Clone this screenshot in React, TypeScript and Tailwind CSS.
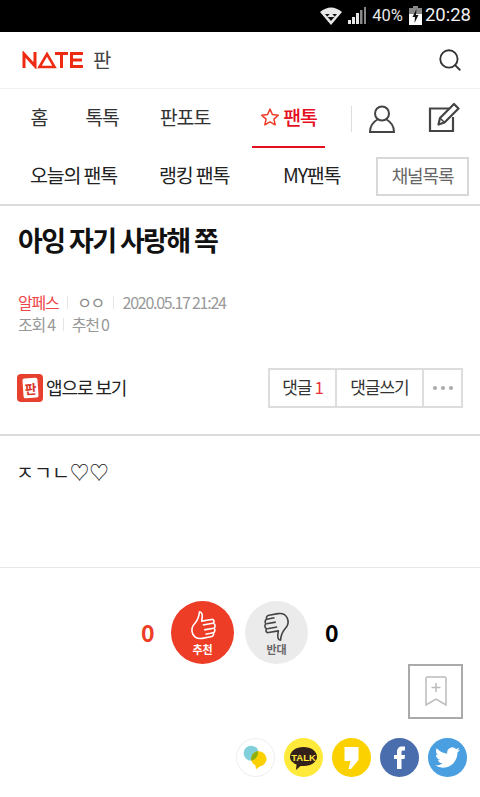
import { Search } from "lucide-react";

const KR = "font-['Noto_Sans_CJK_KR',sans-serif]";

function StatusBar() {
  return (
    <div className="flex h-8 items-center justify-end bg-black pr-[9px] text-white">
      {/* wifi */}
      <svg width="24" height="20" viewBox="0 0 24 20" className="mr-[4px]">
        <path d="M1 6 Q12 -3 23 6 L12 19 Z" fill="#e8e8e8" />
        <path d="M6 8 H18 L12 15 Z" fill="#111" />
        <path d="M8 11 H16 L12 6.5 Z" fill="#e8e8e8" />
      </svg>
      {/* signal */}
      <svg width="20" height="20" viewBox="0 0 20 20" className="mr-[5px]">
        <rect x="1" y="14" width="3" height="4" fill="#e8e8e8" />
        <rect x="5" y="11" width="3" height="7" fill="#e8e8e8" />
        <rect x="9" y="7" width="3" height="11" fill="#e8e8e8" />
        <rect x="13" y="4" width="2.5" height="14" fill="#888" />
        <rect x="17" y="1" width="2" height="17" fill="#888" />
      </svg>
      <span className="mr-[6px] font-['Roboto',sans-serif] text-[16.5px] text-[#e8e8e8]">40%</span>
      {/* battery */}
      <svg width="13" height="20" viewBox="0 0 13 20" className="mr-[3px]">
        <rect x="4" y="0" width="5" height="3" fill="#888" />
        <rect x="0" y="2" width="13" height="6" fill="#888" />
        <rect x="0" y="8" width="13" height="11" fill="#fff" />
        <path d="M7.5 3 L3.5 11 H6 L5.5 17 L9.5 9 H7 Z" fill="#111" />
      </svg>
      <span className="font-['Roboto',sans-serif] text-[18.5px] text-[#f0f0f0]">20:28</span>
    </div>
  );
}

function Header() {
  return (
    <div className="flex h-[57px] items-center justify-between border-b border-[#f0f0f0] pl-[22px] pr-[17px]">
      <div className="flex items-center">
        {/* NATE logo */}
        <svg width="62" height="18" viewBox="0 0 62 18" fill="none" stroke="#ee2a12" strokeWidth="3">
          <path d="M2 17 V3 L13 15 V1" />
          <path d="M17.5 16 L25 3 L32.5 16 Z" strokeWidth="2.6" />
          <path d="M33 2.5 H46 M39.5 2.5 V17" />
          <path d="M61 2.5 H49.5 V15.5 H61 M49.5 9 H60" />
        </svg>
        <span className={`${KR} ml-[9px] text-[20px] leading-none text-[#444]`}>판</span>
      </div>
      <Search size={26} strokeWidth={1.7} color="#333" />
    </div>
  );
}

function Nav() {
  return (
    <div className={`${KR} flex h-[59px] items-center text-[19.5px] tracking-[-0.06em] text-[#333]`}>
      <div className="w-[78px] pb-[3px] text-center">홈</div>
      <div className="w-[48px] pb-[3px] text-center">톡톡</div>
      <div className="w-[118px] pb-[3px] text-center">판포토</div>
      <div className="relative ml-[8px] flex h-full w-[73px] items-center justify-center pb-[3px] font-medium text-[#e60f1e]">
        <svg width="20" height="20" viewBox="0 0 24 24" fill="none" stroke="#ee3a24" strokeWidth="1.8" className="mr-[3px]">
          <path d="M12 2.5 L14.9 9 L22 9.8 L16.7 14.5 L18.2 21.5 L12 17.9 L5.8 21.5 L7.3 14.5 L2 9.8 L9.1 9 Z" strokeLinejoin="round" />
        </svg>
        팬톡
        <div className="absolute inset-x-0 bottom-0 h-[2.5px] bg-[#e60f1e]" />
      </div>
      <div className="ml-[26px] h-[26px] w-px bg-[#ddd]" />
      {/* person */}
      <svg width="28" height="30" viewBox="0 0 28 30" fill="none" stroke="#444" strokeWidth="2" className="ml-[16px]">
        <circle cx="14" cy="9.5" r="7" />
        <path d="M9.5 15.5 C5 18 2 22 2 28 H26 C26 22 23 18 18.5 15.5" />
      </svg>
      {/* write */}
      <svg width="32" height="32" viewBox="0 0 32 32" fill="none" stroke="#444" strokeWidth="2.2" className="ml-[32px] -mt-[2px]">
        <path d="M21 6.5 H2 V29 H25 V15" />
        <path d="M10.5 22.5 L12 16 L26 2 L30.5 6.5 L16.5 20.5 Z" strokeLinejoin="round" />
        <path d="M12 16 L16.5 20.5" strokeWidth="1.5" />
      </svg>
    </div>
  );
}

function SubNav() {
  return (
    <div className={`${KR} flex h-[58px] items-center border-b-2 border-[#dcdcdc] text-[19.5px] tracking-[-0.06em] text-[#222]`}>
      <div className="ml-[30px] w-[129px] pb-[3px]">오늘의 팬톡</div>
      <div className="w-[124px] pb-[3px]">랭킹 팬톡</div>
      <div className="w-[93px] pb-[3px]">MY팬톡</div>
      <div className="flex h-[39px] w-[93px] items-center justify-center border-2 border-[#d8d8d8] pb-[2px] text-[18px] text-[#666]">
        채널목록
      </div>
    </div>
  );
}

function Meta() {
  return (
    <div className="mt-[33px] pl-[18px] text-[16px] leading-[22px] tracking-[-0.08em] text-[#999]">
      <div className="flex items-center">
        <span className="text-[#f0454a]">알페스</span>
        <span className="mx-[9px] h-[13px] w-px bg-[#e5e5e5]" />
        <span className="text-[#888] tracking-[-0.1em]">ㅇㅇ</span>
        <span className="mx-[9px] h-[13px] w-px bg-[#e5e5e5]" />
        <span>2020.05.17 21:24</span>
      </div>
      <div className="flex items-center">
        <span>조회 4</span>
        <span className="mx-[8px] h-[13px] w-px bg-[#e5e5e5]" />
        <span>추천 0</span>
      </div>
    </div>
  );
}

function ActionRow() {
  return (
    <div className="mt-[33px] flex h-[40px] items-center justify-between pl-[17px] pr-[17px]">
      <div className="flex items-center">
        <div className="flex h-[28px] w-[26px] items-center justify-center rounded-[4px] bg-[#e8402e]">
          <div className="flex h-[20px] w-[15px] -rotate-[4deg] items-center justify-center rounded-[2px] bg-white text-[13px] font-bold leading-none text-[#d8352a]">판</div>
        </div>
        <span className="ml-[3px] pb-[2px] text-[18px] tracking-[-0.06em] text-[#222]">앱으로 보기</span>
      </div>
      <div className="flex h-[40px] border-2 border-[#ddd] text-[17px] tracking-[-0.06em] text-[#333]">
        <div className="flex w-[67px] items-center justify-center border-r-2 border-[#ddd] pb-[2px]">
          댓글<span className="ml-[3px] text-[#e8343c]">1</span>
        </div>
        <div className="flex w-[87px] items-center justify-center border-r-2 border-[#ddd] pb-[2px]">댓글쓰기</div>
        <div className="flex w-[37px] flex-1 items-center justify-center gap-[4px]">
          <i className="h-[4px] w-[4px] rounded-full bg-[#aaa]" />
          <i className="h-[4px] w-[4px] rounded-full bg-[#aaa]" />
          <i className="h-[4px] w-[4px] rounded-full bg-[#aaa]" />
        </div>
      </div>
    </div>
  );
}

function Thumb({ color, down }: { color: string; down?: boolean }) {
  return (
    <svg width="28" height="32" viewBox="0 0 28 32" fill="none" stroke={color} strokeWidth="1.6" strokeLinejoin="round" className={down ? "rotate-[170deg]" : "-rotate-[10deg]"}>
      <path d="M13 1.5 C15.5 2 15.5 5 14.5 8 L13.5 11 H23.5 C26 11 26.5 14 24.5 15 C26.5 16 26.5 19 24.5 20 C25.5 21.5 25 24 23 24.5 C23.5 26.5 22 28 20 28 H11 C7 28 3.5 26 2.5 22 C1.5 18 3.5 14 7 11.5 C10 9 12 5 13 1.5 Z" />
      <path d="M14 15 H24 M14.5 20 H24 M15 24.5 H23" />
    </svg>
  );
}

function Votes() {
  return (
    <div className="mt-[33px] flex items-center text-[23px] font-bold">
      <span className="ml-[141px] w-[30px] text-[#ee3d26]">0</span>
      <div className="flex h-[63px] w-[63px] flex-col items-center justify-center rounded-full bg-[#ee3d26] pt-[1px] text-[11px] text-white">
        <Thumb color="#fff" />
        <span className="mt-[1px] leading-[13px]">추천</span>
      </div>
      <div className="ml-[11px] flex h-[63px] w-[63px] flex-col items-center justify-center rounded-full bg-[#ebebeb] text-[11px] text-[#666]">
        <Thumb color="#444" down />
        <span className="mt-[1px] leading-[13px]">반대</span>
      </div>
      <span className="ml-[17px] text-black">0</span>
    </div>
  );
}

function Share() {
  return (
    <div className="mt-[74px] flex justify-end gap-[9px] pr-[13px]">
      {/* band */}
      <div className="h-[39px] w-[39px] rounded-full border border-[#eeeeee] bg-white">
        <svg viewBox="0 0 39 39" className="h-full w-full">
          <circle cx="15" cy="15" r="8" fill="#82cfdc" />
          <path d="M22 13 a8 8 0 0 1 2 16 L20 32 L19.5 28 a8 8 0 0 1 2.5 -15 Z" fill="#fbd000" />
          <path d="M15 20 a8 8 0 0 1 7 -7 C23 17 20 22 15 23 Z" fill="#8fae10" />
        </svg>
      </div>
      {/* kakao talk */}
      <div className="flex h-[39px] w-[39px] items-center justify-center rounded-full bg-[#ffe93a]">
        <svg viewBox="0 0 39 39" className="h-full w-full">
          <path d="M19.5 9 C27 9 33 13 33 19 C33 24 27 28 19.5 28 C18.5 28 17.5 28 16.5 28 L12 32 L12.5 26.5 C8.5 25 6 22 6 19 C6 13 12 9 19.5 9 Z" fill="#33201a" />
          <text x="19.5" y="22.5" textAnchor="middle" fontSize="9.5" fontWeight="700" fill="#ffe93a" fontFamily="Liberation Sans, sans-serif">TALK</text>
        </svg>
      </div>
      {/* kakao story */}
      <div className="h-[39px] w-[39px] rounded-full bg-[#fbd200]">
        <svg viewBox="0 0 39 39" className="h-full w-full">
          <path d="M12.5 9 H26.5 V22 L19 31 H16.5 L18.5 23 H12.5 Z" fill="#fff" />
        </svg>
      </div>
      {/* facebook */}
      <div className="h-[39px] w-[39px] rounded-full bg-[#4a6ead]">
        <svg viewBox="0 0 39 39" className="h-full w-full">
          <path d="M17 31 V21 H14 V17 H17 V14 C17 10.5 19 8.5 22 8.5 H25 V12.5 H23 C21.8 12.5 21.5 13 21.5 14.2 V17 H25 L24.5 21 H21.5 V31 Z" fill="#fff" />
        </svg>
      </div>
      {/* twitter */}
      <div className="h-[39px] w-[39px] rounded-full bg-[#4a9fe0]">
        <svg viewBox="0 0 24 24" className="h-full w-full p-[7px]">
          <path fill="#fff" d="M23.95 4.57a10 10 0 0 1-2.82.77 4.96 4.96 0 0 0 2.16-2.72c-.95.55-2 .95-3.13 1.18a4.92 4.92 0 0 0-8.38 4.48C7.69 8.1 4.07 6.13 1.64 3.16a4.82 4.82 0 0 0-.67 2.48c0 1.71.87 3.21 2.19 4.1a4.9 4.9 0 0 1-2.23-.62v.06a4.92 4.92 0 0 0 3.95 4.83 5 5 0 0 1-2.21.08 4.94 4.94 0 0 0 4.6 3.42A9.87 9.87 0 0 1 0 19.54a14 14 0 0 0 7.56 2.21c9.05 0 14-7.5 14-13.98 0-.21 0-.42-.02-.63a9.94 9.94 0 0 0 2.46-2.55z" />
        </svg>
      </div>
    </div>
  );
}

export default function App() {
  return (
    <div className={`${KR} relative h-[797px] w-[480px] overflow-hidden bg-white`}>
      <StatusBar />
      <Header />
      <Nav />
      <SubNav />

      <h1 className="mt-[16px] pl-[18px] text-[27px] font-bold leading-[36px] tracking-[-0.06em] text-[#111]">
        아잉 자기 사랑해 쪽
      </h1>
      <Meta />
      <ActionRow />

      <div className="mt-[26px] h-[2px] bg-[#dcdcdc]" />
      <div className="h-[132px] border-b border-[#e8e8e8] pl-[16px] pt-[21px] text-[19.5px] leading-[30px] text-[#222]">
        ㅈㄱㄴ♡♡
      </div>

      <Votes />
      <Share />

      {/* floating bookmark */}
      <div className="absolute left-[408px] top-[664px] flex h-[55px] w-[55px] items-center justify-center border-2 border-[#aaa] bg-white/90">
        <svg width="22" height="31" viewBox="0 0 22 31" fill="none" stroke="#bbb" strokeWidth="1.5">
          <path d="M1 3 Q1 1 3 1 H19 Q21 1 21 3 V29 L11 23 L1 29 Z" />
          <path d="M11 7 V16 M6.5 11.5 H15.5" />
        </svg>
      </div>
    </div>
  );
}
